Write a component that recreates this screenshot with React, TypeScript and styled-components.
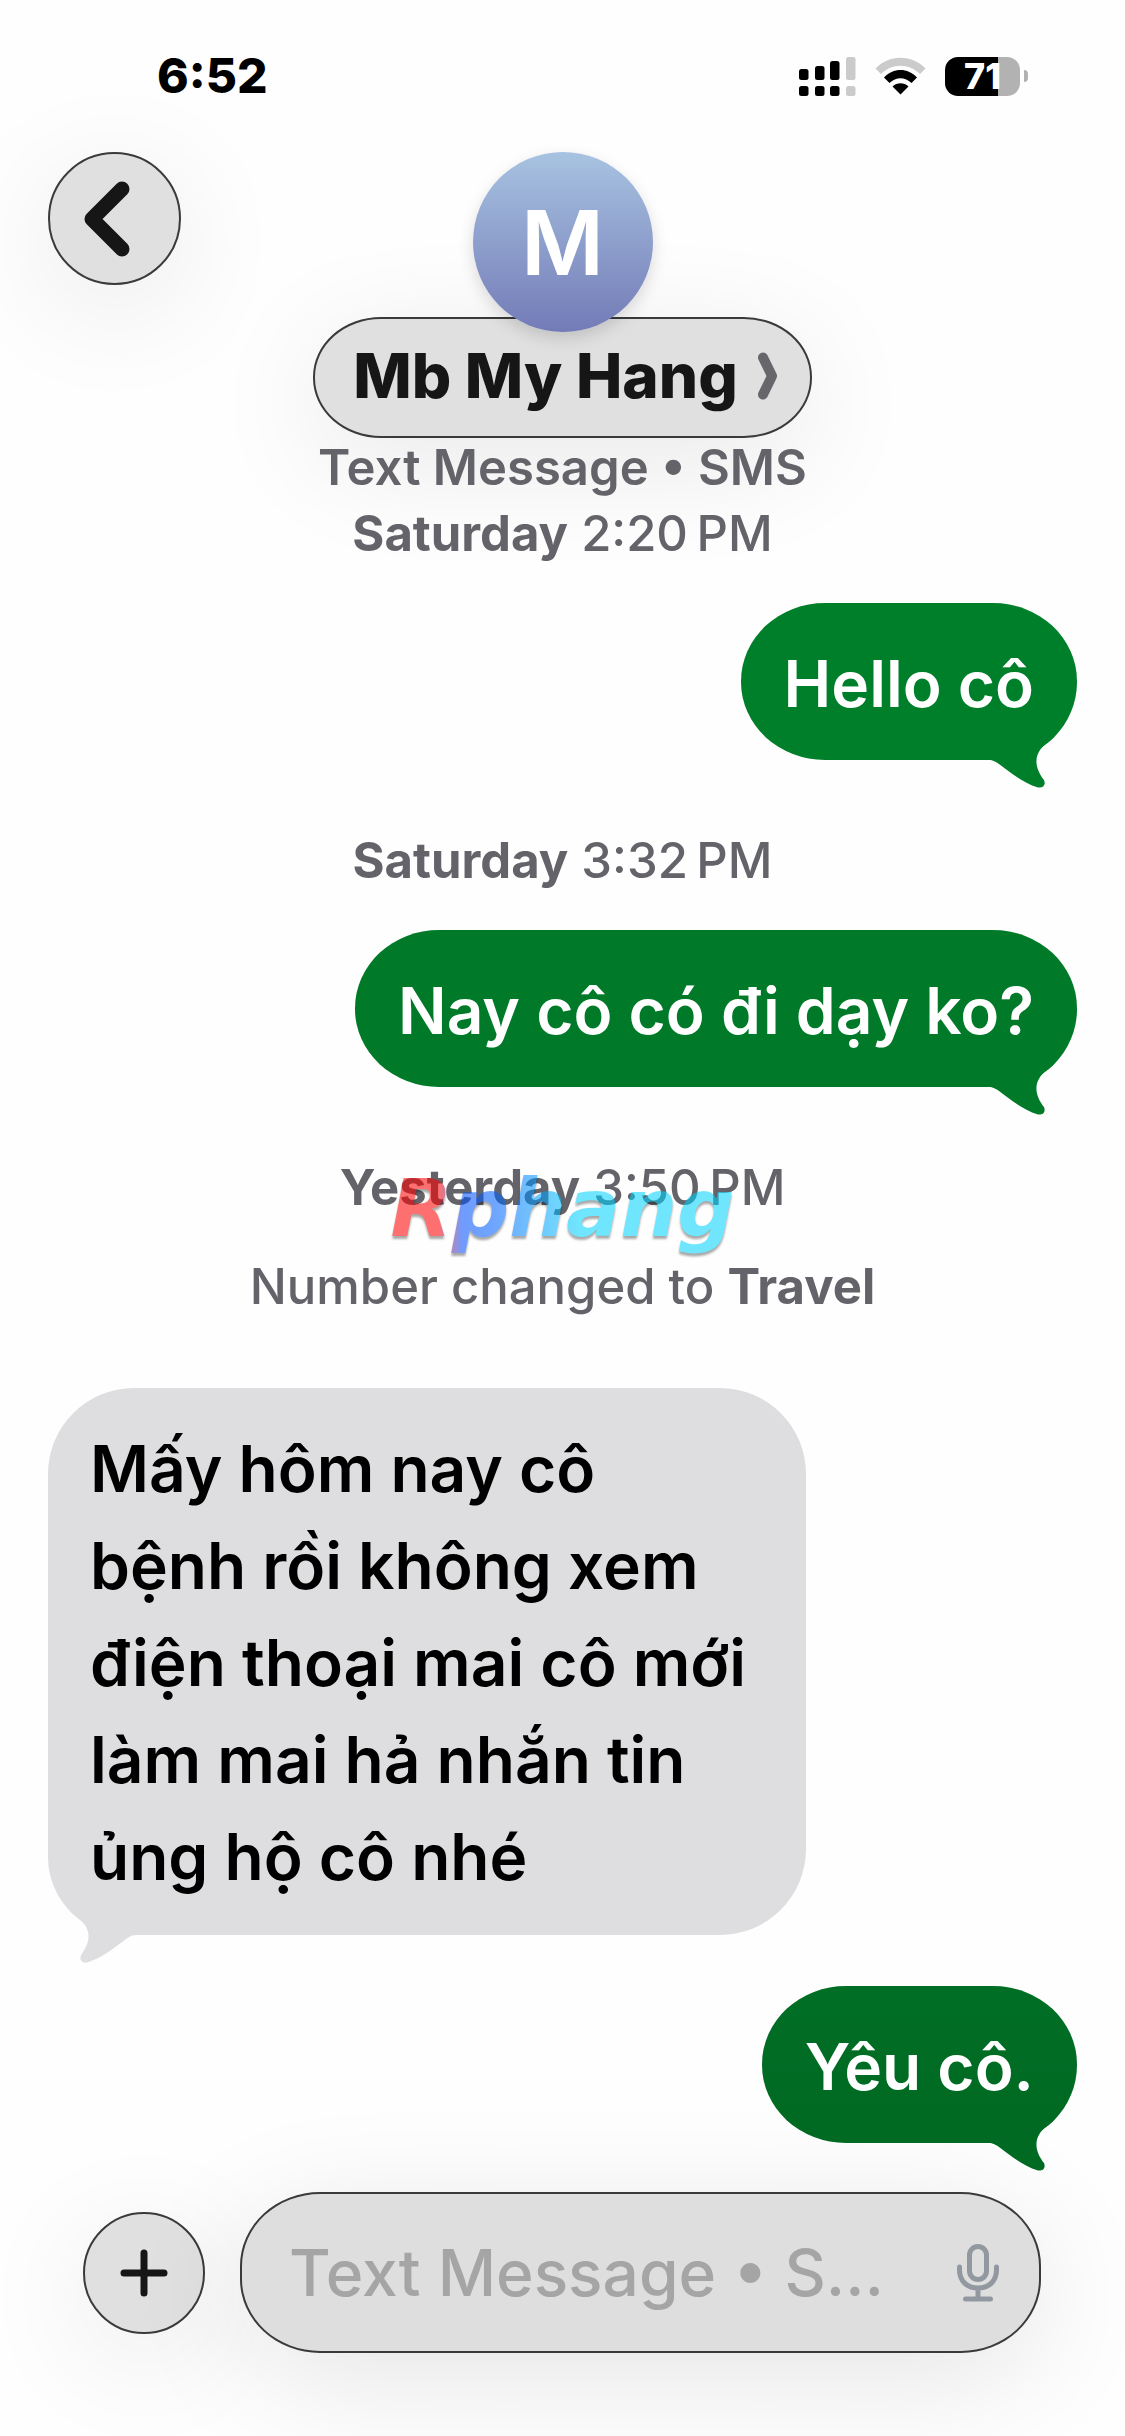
import React from "react";
import styled, { createGlobalStyle } from "styled-components";

const GlobalStyle = createGlobalStyle`
  *, *::before, *::after { box-sizing: border-box; }
  body {
    margin: 0;
    background: #fefefe;
    font-family: Inter, "Liberation Sans", sans-serif;
    color: #000;
  }
  button, input { font: inherit; }
`;

const Screen = styled.div`
  display: flex;
  flex-direction: column;
  min-height: 100vh;
  overflow-x: hidden;
  padding: 0 48px 83px;
`;

const StatusBar = styled.div`
  display: flex;
  justify-content: space-between;
  align-items: center;
  padding: 46px 49px 46px 109px;
`;

const Clock = styled.time`
  font-size: 48px;
  line-height: 60px;
  font-weight: 800;
`;

const StatusIcons = styled.div`
  display: flex;
  align-items: center;
  gap: 19px;
`;

const Battery = styled.div`
  display: flex;
  align-items: center;
  gap: 4px;
`;

const BatteryBody = styled.div`
  width: 75px;
  height: 39px;
  border-radius: 13px;
  background: linear-gradient(90deg, #000 71%, #b2b2b2 71%);
  color: #fff;
  font-size: 36px;
  line-height: 39px;
  font-weight: 800;
  text-align: center;
`;

const BatteryNub = styled.div`
  width: 4px;
  height: 12px;
  border-radius: 0 6px 6px 0;
  background: #b2b2b2;
`;

const Header = styled.header`
  display: grid;
  grid-template-columns: 1fr auto 1fr;
  align-items: start;
`;

const RoundButton = styled.button<{ $size: number }>`
  display: flex;
  flex: none;
  align-items: center;
  justify-content: center;
  width: ${(p) => p.$size}px;
  height: ${(p) => p.$size}px;
  padding: 0;
  border: 2px solid #3a3a3a;
  border-radius: 50%;
  background: #e0e0e0;
  box-shadow: 0 24px 120px rgba(0, 0, 0, 0.09);
`;

const Contact = styled.div`
  display: flex;
  flex-direction: column;
  align-items: center;
`;

const Avatar = styled.div`
  z-index: 1;
  display: flex;
  align-items: center;
  justify-content: center;
  width: 180px;
  height: 180px;
  margin-bottom: -15px;
  padding-top: 2px;
  border-radius: 50%;
  background: linear-gradient(#a8c3e1, #737bb7);
  box-shadow: 0 6px 16px rgba(0, 0, 0, 0.14);
  color: #fff;
  font-size: 90px;
  line-height: 92px;
  font-weight: 600;
`;

const NameButton = styled.button`
  display: flex;
  align-items: center;
  gap: 20px;
  height: 121px;
  padding: 0 32px 4px 38px;
  border: 2px solid #3a3a3a;
  border-radius: 68px / 60px;
  background: #e0e0e0;
  box-shadow: 0 24px 120px rgba(0, 0, 0, 0.09);
  color: #161616;
  font-size: 62px;
  line-height: 76px;
  font-weight: 800;
  white-space: nowrap;
`;

const Thread = styled.main`
  display: flex;
  flex: 1;
  flex-direction: column;
  align-items: center;
`;

const Meta = styled.div<{ $above?: number; $strong?: boolean }>`
  position: relative;
  margin-top: ${(p) => p.$above ?? 0}px;
  color: #646369;
  font-size: 49px;
  line-height: 60px;
  font-weight: ${(p) => (p.$strong ? 600 : 500)};
  text-align: center;

  strong { font-weight: 700; }
`;

const Bubble = styled.div<{ $fill: string; $incoming?: boolean; $above: number }>`
  position: relative;
  align-self: ${(p) => (p.$incoming ? "flex-start" : "flex-end")};
  max-width: 758px;
  margin-top: ${(p) => p.$above}px;
  padding: ${(p) => (p.$incoming ? "32px 54px 30px 42px" : "32px 43px 28px")};
  border-radius: ${(p) =>
    p.$incoming
      ? "86px 86px 86px 78px"
      : "84px 84px 78px 84px / 78px"};
  background: ${(p) => p.$fill};
  color: ${(p) => (p.$incoming ? "#000" : "#fff")};
  font-size: 64px;
  line-height: 97px;
  font-weight: 600;
`;

const TailSvg = styled.svg<{ $incoming?: boolean }>`
  position: absolute;
  bottom: -28px;
  ${(p) => (p.$incoming ? "left: 20px; transform: scaleX(-1);" : "right: 20px;")}
`;

const Watermark = styled.div`
  position: absolute;
  top: 3px;
  left: 50%;
  transform: translateX(-50%);
  opacity: 0.56;
  background: linear-gradient(90deg, #ff0000 14%, #0050ff 21%, #0060ff 30%, #00d4ff 55%);
  background-clip: text;
  -webkit-background-clip: text;
  color: transparent;
  filter: drop-shadow(0 3px 1px rgba(0, 0, 0, 0.6));
  font-family: "DejaVu Sans", sans-serif;
  font-size: 80px;
  line-height: 96px;
  font-weight: 700;
  font-style: italic;
`;

const Composer = styled.form`
  display: flex;
  align-items: center;
  gap: 35px;
  padding: 49px 36px 0 35px;
`;

const Field = styled.div`
  display: flex;
  flex: 1;
  align-items: center;
  min-width: 0;
  height: 161px;
  padding: 0 40px 0 47px;
  border: 2px solid #3a3a3a;
  border-radius: 80px / 74px;
  background: #dedede;
  box-shadow: 0 24px 120px rgba(0, 0, 0, 0.1);
`;

const TextBox = styled.input`
  flex: 1;
  min-width: 0;
  height: 100px;
  margin-right: 70px;
  padding: 0;
  border: 0;
  outline: 0;
  background: transparent;
  color: #000;
  font-size: 64px;
  font-weight: 500;
  text-overflow: ellipsis;

  &::placeholder { color: #a5a5a5; opacity: 1; }
`;

const MicButton = styled.button`
  display: flex;
  padding: 0;
  border: 0;
  background: transparent;
`;

function Signal() {
  const bars = [
    { x: 0, top: 12, on: true },
    { x: 16, top: 9, on: true },
    { x: 31, top: 4, on: true },
    { x: 47, top: 0, on: false },
  ];
  return (
    <svg width="57" height="39" viewBox="0 0 57 39" aria-label="Signal">
      {bars.map((b) => (
        <g key={b.x} fill={b.on ? "#000" : "#cbcbcb"}>
          <rect x={b.x} y={b.top} width="9.5" height={23 - b.top} rx="2.5" />
          <rect x={b.x} y="29" width="9.5" height="10" rx="2.5" />
        </g>
      ))}
    </svg>
  );
}

function Wifi() {
  return (
    <svg width="51" height="38" viewBox="0 0 51 38" aria-label="Wi-Fi">
      <path d="M0.5 11.5C14-3 37-3 50.5 11.5L45 17C34 6 17 6 6 17Z" fill="#cbcbcb" />
      <path d="M9 20.5C18 10.5 33 10.5 42 20.5L36.5 26C30 19.5 21 19.5 14.5 26Z" fill="#000" />
      <path d="M17.5 29.5C22 25.300 29 25.300 33.500 29.500L25.500 37.500Z" fill="#000" />
    </svg>
  );
}

function Tail({ fill, incoming }: { fill: string; incoming?: boolean }) {
  return (
    <TailSvg $incoming={incoming} width="70" height="50" viewBox="0 0 70 50" aria-hidden="true">
      <path
        d="M0 10L0 22C5 22 7 22.500 12 26C24 35 36 45 51 49.500C56 50 59 47 57 42C50 33 43 18 60 5L66 0L30 0Z"
        fill={fill}
      />
    </TailSvg>
  );
}

function Message(props: {
  fill: string;
  tail: string;
  above: number;
  incoming?: boolean;
  children: React.ReactNode;
}) {
  return (
    <Bubble $fill={props.fill} $incoming={props.incoming} $above={props.above}>
      <Tail fill={props.tail} incoming={props.incoming} />
      {props.children}
    </Bubble>
  );
}

export default function App() {
  return (
    <>
      <GlobalStyle />
      <Screen>
        <StatusBar>
          <Clock>6:52</Clock>
          <StatusIcons>
            <Signal />
            <Wifi />
            <Battery>
              <BatteryBody>71</BatteryBody>
              <BatteryNub />
            </Battery>
          </StatusIcons>
        </StatusBar>

        <Header>
          <RoundButton $size={133} type="button" aria-label="Back">
            <svg width="62" height="76" viewBox="0 0 62 76" fill="none">
              <path d="M38 8L8 38L38 68" stroke="#161616" strokeWidth="15" strokeLinecap="round" strokeLinejoin="round" />
            </svg>
          </RoundButton>
          <Contact>
            <Avatar>M</Avatar>
            <NameButton type="button">
              Mb My Hang
              <svg width="20" height="48" viewBox="0 0 20 48" fill="none" aria-hidden="true">
                <path d="M5 5.500L14 24L5 42.500" stroke="#67666b" strokeWidth="10" strokeLinecap="round" strokeLinejoin="round" />
              </svg>
            </NameButton>
          </Contact>
        </Header>

        <Thread>
          <Meta $strong>Text Message • SMS</Meta>
          <Meta $above={6}><strong>Saturday</strong> 2:20{"\u202f"}PM</Meta>
          <Message above={39} fill="#007f2a" tail="#007f2a">Hello cô</Message>
          <Meta $above={71}><strong>Saturday</strong> 3:32{"\u202f"}PM</Meta>
          <Message above={39} fill="#007a28" tail="#007a28">Nay cô có đi dạy ko?</Message>
          <Meta $above={71}>
            <strong>Yesterday</strong> 3:50{"\u202f"}PM
            <Watermark>Rphang</Watermark>
          </Meta>
          <Meta $above={39}>Number changed to <strong>Travel</strong></Meta>
          <Message above={71} incoming fill="#dedee0" tail="#dedee0">
            Mấy hôm nay cô bệnh rồi không xem điện thoại mai cô mới làm mai hả nhắn tin ủng hộ cô nhé
          </Message>
          <Message above={51} fill="linear-gradient(#006e25, #006922)" tail="#006922">Yêu cô.</Message>
        </Thread>

        <Composer onSubmit={(e) => e.preventDefault()}>
          <RoundButton $size={122} type="button" aria-label="Add">
            <svg width="48" height="48" viewBox="0 0 48 48" fill="none">
              <path d="M24 4V44M4 24H44" stroke="#161616" strokeWidth="7" strokeLinecap="round" />
            </svg>
          </RoundButton>
          <Field>
            <TextBox aria-label="Message" placeholder="Text Message • SMS" />
            <MicButton type="button" aria-label="Dictate">
              <svg width="42" height="58" viewBox="0 0 42 58" fill="none" stroke="#92989f" strokeWidth="5" strokeLinecap="round">
                <rect x="12.500" y="2.500" width="17" height="33" rx="8.500" />
                <path d="M2.500 23V26C2.500 37 10 44 21 44C32 44 39.500 37 39.500 26V23M21 44V54M8.500 55H33.500" />
              </svg>
            </MicButton>
          </Field>
        </Composer>
      </Screen>
    </>
  );
}
